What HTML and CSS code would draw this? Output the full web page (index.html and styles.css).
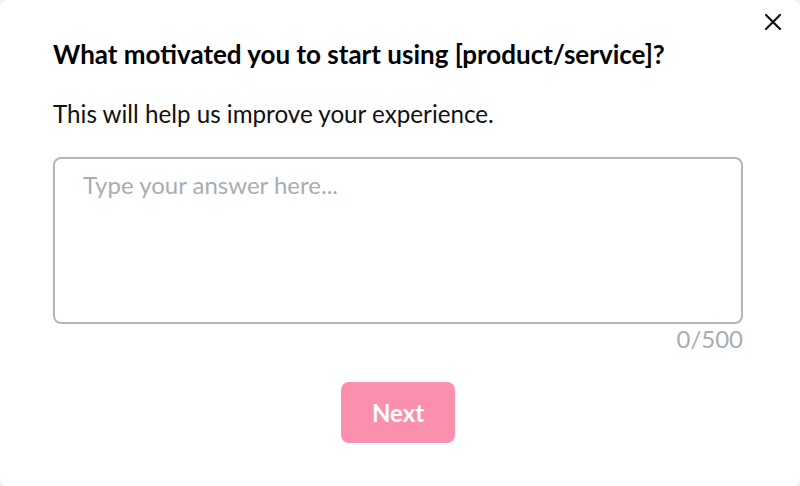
FILE: index.html
```html
<!DOCTYPE html>
<html lang="en">
<head>
    <meta charset="UTF-8">
    <meta name="viewport" content="width=device-width, initial-scale=1.0">
    <title>Survey</title>
    <link rel="stylesheet" href="styles.css">
</head>
<body>
    <div class="modal">
        <button class="closeBtn" aria-label="Close">
            <svg width="18" height="18" viewBox="0 0 18 18">
                <path d="M2 2 L16 16 M16 2 L2 16" stroke="#111" stroke-width="2.2" stroke-linecap="round"/>
            </svg>
        </button>
        <h2 class="question">What motivated you to start using [product/service]?</h2>
        <p class="hint">This will help us improve your experience.</p>
        <textarea class="answer" placeholder="Type your answer here..." maxlength="500"></textarea>
        <div class="counter">0/500</div>
        <div class="actions">
            <button class="nextBtn">Next</button>
        </div>
    </div>
</body>
</html>
```

FILE: styles.css
```css
body {
    font-family: Lato, 'Noto Sans', sans-serif;
    margin: 0;
    padding: 0;
    background: #f0f0f0;
    color: #111;
}

.modal {
    position: relative;
    box-sizing: border-box;
    width: 800px;
    height: 486px;
    background: #fff;
    border-radius: 8px;
    padding: 39px 57px 0 53px;
}

.closeBtn {
    position: absolute;
    top: 13px;
    right: 18px;
    background: none;
    border: none;
    padding: 0;
    cursor: pointer;
}

.question {
    font-size: 26px;
    font-weight: bold;
    margin: 0;
    line-height: 30px;
    color: #000;
}

.hint {
    font-size: 24.2px;
    margin: 30px 0 0;
    line-height: 30px;
}

.answer {
    display: block;
    box-sizing: border-box;
    width: 690px;
    height: 167px;
    margin-top: 28px;
    padding: 11px 28px;
    border: 2px solid #b3b6ba;
    border-radius: 8px;
    font-family: inherit;
    font-size: 24px;
    resize: none;
    outline: none;
}

.answer::placeholder {
    color: #a9adb2;
}

.counter {
    text-align: right;
    width: 690px;
    font-size: 24px;
    color: #a9adb2;
    line-height: 30px;
}

.actions {
    width: 690px;
    display: flex;
    justify-content: center;
    margin-top: 28px;
}

.nextBtn {
    width: 114px;
    height: 61px;
    background: #fb8fae;
    color: #fff;
    border: none;
    border-radius: 8px;
    font-family: inherit;
    font-size: 24px;
    font-weight: bold;
    cursor: pointer;
}
```
